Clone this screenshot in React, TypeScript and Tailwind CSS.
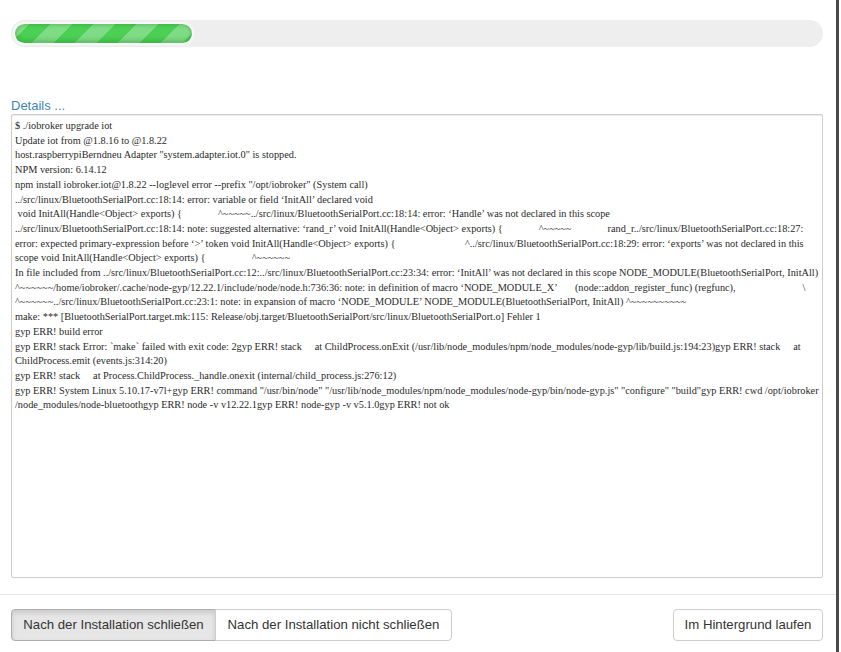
const logLines = [
  '$ ./iobroker upgrade iot',
  'Update iot from @1.8.16 to @1.8.22',
  'host.raspberrypiBerndneu Adapter "system.adapter.iot.0" is stopped.',
  'NPM version: 6.14.12',
  'npm install iobroker.iot@1.8.22 --loglevel error --prefix "/opt/iobroker" (System call)',
  '../src/linux/BluetoothSerialPort.cc:18:14: error: variable or field ‘InitAll’ declared void',
  ' void InitAll(Handle<Object> exports) {              ^~~~~~../src/linux/BluetoothSerialPort.cc:18:14: error: ‘Handle’ was not declared in this scope',
  '../src/linux/BluetoothSerialPort.cc:18:14: note: suggested alternative: ‘rand_r’ void InitAll(Handle<Object> exports) {              ^~~~~~              rand_r../src/linux/BluetoothSerialPort.cc:18:27:',
  'error: expected primary-expression before ‘>’ token void InitAll(Handle<Object> exports) {                           ^../src/linux/BluetoothSerialPort.cc:18:29: error: ‘exports’ was not declared in this',
  'scope void InitAll(Handle<Object> exports) {                  ^~~~~~~',
  'In file included from ../src/linux/BluetoothSerialPort.cc:12:../src/linux/BluetoothSerialPort.cc:23:34: error: ‘InitAll’ was not declared in this scope NODE_MODULE(BluetoothSerialPort, InitAll)',
  '^~~~~~~/home/iobroker/.cache/node-gyp/12.22.1/include/node/node.h:736:36: note: in definition of macro ‘NODE_MODULE_X’       (node::addon_register_func) (regfunc),                          \\',
  '^~~~~~~../src/linux/BluetoothSerialPort.cc:23:1: note: in expansion of macro ‘NODE_MODULE’ NODE_MODULE(BluetoothSerialPort, InitAll) ^~~~~~~~~~~',
  'make: *** [BluetoothSerialPort.target.mk:115: Release/obj.target/BluetoothSerialPort/src/linux/BluetoothSerialPort.o] Fehler 1',
  'gyp ERR! build error',
  'gyp ERR! stack Error: `make` failed with exit code: 2gyp ERR! stack     at ChildProcess.onExit (/usr/lib/node_modules/npm/node_modules/node-gyp/lib/build.js:194:23)gyp ERR! stack     at',
  'ChildProcess.emit (events.js:314:20)',
  'gyp ERR! stack     at Process.ChildProcess._handle.onexit (internal/child_process.js:276:12)',
  'gyp ERR! System Linux 5.10.17-v7l+gyp ERR! command "/usr/bin/node" "/usr/lib/node_modules/npm/node_modules/node-gyp/bin/node-gyp.js" "configure" "build"gyp ERR! cwd /opt/iobroker',
  '/node_modules/node-bluetoothgyp ERR! node -v v12.22.1gyp ERR! node-gyp -v v5.1.0gyp ERR! not ok',
];

const App = () => {
  return (
    <div className="flex h-[652px] w-[841px] overflow-hidden bg-white font-['Liberation_Sans',Arial,sans-serif]">
      <main className="flex w-[836px] shrink-0 flex-col">
        <div className="px-[11px] pt-[20px] pr-[13px]">
          <div className="h-[27px] rounded-full bg-[#eeeeee] p-[4px]">
            <div className="h-[19px] w-[177px] rounded-full bg-[#4ccf55] bg-[linear-gradient(-45deg,rgba(255,255,255,0.28)_25%,transparent_25%,transparent_50%,rgba(255,255,255,0.28)_50%,rgba(255,255,255,0.28)_75%,transparent_75%,transparent)] bg-[length:43px_43px] bg-[position:14px_0] shadow-[inset_0_-3px_4px_rgba(0,90,0,0.22),inset_0_2px_3px_rgba(0,90,0,0.15),0_0_2px_2px_rgba(255,255,255,0.7)]" />
          </div>
        </div>

        <div className="mt-[49px] px-[11px] pr-[13px]">
          <div className="h-[18px] text-[13px] leading-[20px] text-[#3f86b8]">Details ...</div>
          <div className="h-[464px] overflow-hidden rounded-[2px] border border-[#cccccc] px-[3px] pt-[4px] font-['Liberation_Serif','Times_New_Roman',serif] text-[10.3px] leading-[14.7px] text-[#2a2a2a] shadow-[inset_0_1px_1px_rgba(0,0,0,0.08)]">
            {logLines.map((line, i) => (
              <div key={i} className="whitespace-pre">
                {line}
              </div>
            ))}
          </div>
        </div>

        <div className="mt-[16px] flex items-start justify-between border-t border-[#e5e5e5] px-[11px] pt-[14px] pr-[13px]">
          <div className="flex">
            <button
              type="button"
              className="h-[32px] w-[205px] rounded-l-[4px] border border-[#adadad] bg-[#e6e6e6] text-[13.2px] text-[#333333] shadow-[inset_0_3px_5px_rgba(0,0,0,0.125)]"
            >
              Nach der Installation schließen
            </button>
            <button
              type="button"
              className="ml-[-1px] h-[32px] w-[237px] rounded-r-[4px] border border-[#cccccc] bg-white text-[13.2px] text-[#333333]"
            >
              Nach der Installation nicht schließen
            </button>
          </div>
          <button
            type="button"
            className="h-[32px] w-[150px] rounded-[4px] border border-[#cccccc] bg-white text-[13.2px] text-[#333333]"
          >
            Im Hintergrund laufen
          </button>
        </div>
      </main>
      <div className="w-[3px] shrink-0 bg-[#4a4a4a]" />
    </div>
  );
};

export default App;
